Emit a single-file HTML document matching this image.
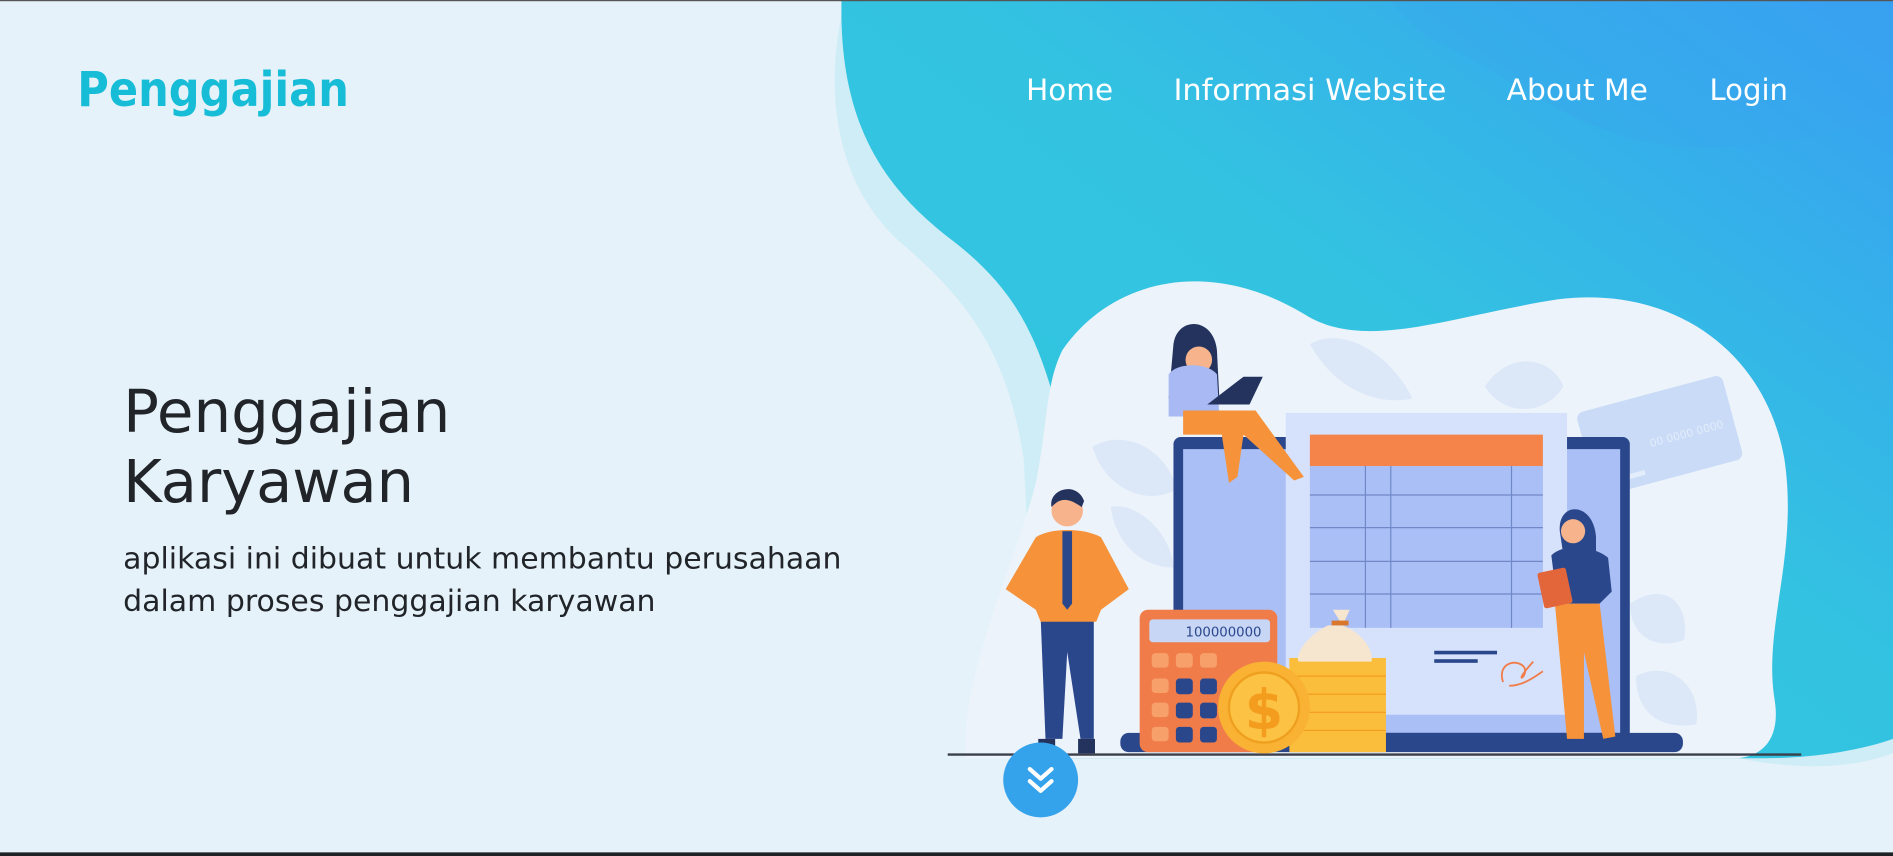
<!DOCTYPE html>
<html><head><meta charset="utf-8"><style>
html,body{margin:0;padding:0;width:1893px;height:856px;overflow:hidden;background:#e5f2fa}
svg{display:block}
text{font-family:"DejaVu Sans","Liberation Sans",sans-serif}
</style></head><body>
<svg width="1893" height="856" viewBox="0 0 1568 709" preserveAspectRatio="none">
<defs>
<linearGradient id="bg" x1="0" y1="1" x2="1" y2="0">
<stop offset="0" stop-color="#2ec6dc"/><stop offset="0.55" stop-color="#33c3e1"/><stop offset="1" stop-color="#379ff2"/>
</linearGradient>
</defs>
<rect width="1568" height="709" fill="#e5f2fa"/>
<!-- light outer blob -->
<path d="M700,0 C682,70 690,150 745,200 C810,255 835,300 848,380 L860,628 L1440,628 C1500,640 1540,634 1568,624 L1568,0 Z" fill="#cfedf6"/>
<!-- blue blob -->
<path d="M697,0 L1568,0 L1568,612 C1540,622 1500,628 1462,628 L880,628 L870,320 C855,270 835,235 790,200 C730,155 695,100 697,0 Z" fill="url(#bg)"/>
<path d="M1180,30 C1250,60 1300,110 1380,120 C1450,128 1520,110 1568,95 L1568,0 L1150,0 Z" fill="#3aa4ee" opacity="0.25"/>
<!-- white illustration blob -->
<path d="M880,290 C920,232 1000,212 1080,260 C1130,292 1200,262 1290,248 C1385,236 1462,290 1478,380 C1490,460 1460,520 1470,580 C1475,612 1460,626 1440,628 L800,628 C795,560 840,470 858,400 C868,350 866,318 880,290 Z" fill="#ecf3fb"/>
<!-- faint leaves -->
<g fill="#dce8f8">
<path d="M1085,285 C1110,270 1150,290 1170,330 C1150,335 1110,330 1085,285Z"/>
<path d="M1230,320 C1250,290 1285,295 1295,320 C1280,345 1245,345 1230,320Z"/>
<path d="M905,370 C930,355 965,370 975,405 C950,420 915,405 905,370Z"/>
<path d="M920,420 C940,415 970,440 972,470 C950,470 925,455 920,420Z"/>
<path d="M1350,500 C1380,480 1400,500 1395,530 C1370,540 1350,525 1350,500Z"/>
<path d="M1355,560 C1385,545 1410,570 1405,600 C1375,605 1355,590 1355,560Z"/>
</g>
<!-- credit card -->
<g transform="rotate(-15 1375 360)">
<rect x="1312" y="325" width="125" height="72" rx="6" fill="#c9dbf6"/>
<rect x="1320" y="385" width="35" height="4" fill="#e4edfb"/>
<text x="1365" y="368" font-size="9" fill="#e4edfb">00 0000 0000</text>
</g>
<!-- ground -->
<line x1="785" y1="625" x2="1492" y2="625" stroke="#3a3f4a" stroke-width="2"/>
<!-- laptop -->
<rect x="972" y="362" width="378" height="250" rx="6" fill="#2b478c"/>
<rect x="980" y="372" width="362" height="235" fill="#aabff6"/>
<rect x="928" y="607" width="466" height="16" rx="7" fill="#2b478c"/>
<!-- document -->
<rect x="1065" y="342" width="233" height="250" fill="#d6e2fb"/>
<rect x="1085" y="360" width="193" height="26" fill="#f4844a"/>
<rect x="1085" y="386" width="193" height="134" fill="#aabff6"/>
<g stroke="#7088c8" stroke-width="1">
<line x1="1085" y1="410" x2="1278" y2="410"/><line x1="1085" y1="437" x2="1278" y2="437"/>
<line x1="1085" y1="465" x2="1278" y2="465"/><line x1="1085" y1="492" x2="1278" y2="492"/>
<line x1="1131" y1="386" x2="1131" y2="520"/><line x1="1152" y1="386" x2="1152" y2="520"/>
<line x1="1252" y1="386" x2="1252" y2="520"/>
</g>
<rect x="1188" y="539" width="52" height="3" fill="#2b478c"/>
<rect x="1188" y="546" width="36" height="3" fill="#2b478c"/>
<path d="M1245,565 C1240,550 1255,545 1262,552 C1268,560 1250,570 1270,548 M1250,568 C1262,568 1272,560 1278,556" stroke="#f07c4a" stroke-width="1.5" fill="none"/>
<!-- calculator -->
<rect x="944" y="505" width="114" height="118" rx="7" fill="#f07c4a"/>
<rect x="952" y="513" width="100" height="19" rx="3" fill="#c7d6f5"/>
<text x="982" y="527" font-size="11" fill="#2b478c">100000000</text>
<g fill="#f7a06a">
<rect x="954" y="541" width="14" height="12" rx="3"/><rect x="974" y="541" width="14" height="12" rx="3"/><rect x="994" y="541" width="14" height="12" rx="3"/>
<rect x="954" y="562" width="14" height="12" rx="3"/><rect x="954" y="582" width="14" height="12" rx="3"/><rect x="954" y="602" width="14" height="12" rx="3"/>
</g>
<g fill="#2b478c">
<rect x="974" y="562" width="14" height="13" rx="3"/><rect x="994" y="562" width="14" height="13" rx="3"/>
<rect x="974" y="582" width="14" height="13" rx="3"/><rect x="994" y="582" width="14" height="13" rx="3"/>
<rect x="974" y="602" width="14" height="13" rx="3"/><rect x="994" y="602" width="14" height="13" rx="3"/>
</g>
<!-- coin stacks -->
<rect x="1068" y="545" width="80" height="78" fill="#fbbd3c"/>
<g stroke="#f39c1e" stroke-width="1"><line x1="1068" y1="560" x2="1148" y2="560"/><line x1="1068" y1="575" x2="1148" y2="575"/><line x1="1068" y1="590" x2="1148" y2="590"/><line x1="1068" y1="605" x2="1148" y2="605"/></g>
<!-- money bag -->
<path d="M1100,518 C1080,528 1072,545 1076,548 L1136,548 C1138,540 1130,525 1112,518 Z" fill="#f6e6cf"/>
<path d="M1104,505 L1118,505 L1112,518 Z" fill="#f6e6cf"/>
<rect x="1103" y="514" width="14" height="4" fill="#d9772c"/>
<!-- coin -->
<circle cx="1047" cy="586" r="38" fill="#f9b233"/>
<circle cx="1047" cy="586" r="29" fill="#fcc244" stroke="#f0a020" stroke-width="2"/>
<text x="1047" y="604" font-size="46" font-weight="bold" fill="#f39c1e" text-anchor="middle">$</text>
<!-- man -->
<path d="M866,612 L862,512 L906,512 L906,612 L895,612 L884,540 L880,612 Z" fill="#2b478c"/>
<path d="M858,445 C870,437 898,437 912,445 L935,488 L912,505 L908,515 L862,515 L858,505 L833,488 Z" fill="#f5923a"/>
<path d="M880,440 L888,440 L888,500 L884,505 L880,500 Z" fill="#2b478c"/>
<circle cx="884" cy="423" r="13" fill="#f6b38c"/>
<path d="M871,420 C868,405 892,398 898,415 L896,420 C885,412 878,412 871,420Z" fill="#24335e"/>
<rect x="860" y="612" width="14" height="12" fill="#24335e"/><rect x="893" y="612" width="14" height="12" fill="#24335e"/>
<!-- sitting woman -->
<path d="M972,285 C975,262 1005,262 1008,290 L1010,330 L968,330 Z" fill="#24335e"/>
<circle cx="993" cy="298" r="11" fill="#f6b38c"/>
<path d="M968,310 C975,300 1000,300 1008,310 L1010,345 L968,345 Z" fill="#a8b9f4"/>
<path d="M980,340 L1040,340 L1080,395 L1072,398 L1030,360 L1025,395 L1018,400 L1012,360 L980,360 Z" fill="#f5923a"/>
<path d="M1000,335 L1030,312 L1046,312 L1035,335 Z" fill="#24335e"/>
<!-- standing woman right -->
<path d="M1292,440 C1290,415 1320,415 1322,445 L1322,460 L1295,460 Z" fill="#2b478c"/>
<circle cx="1303" cy="440" r="10" fill="#f6b38c"/>
<path d="M1285,460 C1295,450 1320,452 1332,462 L1335,490 L1325,500 L1290,500 Z" fill="#2b478c"/>
<path d="M1288,500 L1325,500 L1338,610 L1328,612 L1312,540 L1312,612 L1298,612 Z" fill="#f5923a"/>
<rect x="1276" y="472" width="24" height="30" rx="2" fill="#e3653a" transform="rotate(-12 1288 487)"/>
<path d="M1286,615 L1312,615 L1310,622 L1290,622Z M1326,612 L1340,612 L1340,622 L1326,622Z" fill="#2b478c"/>
<!-- scroll button -->
<circle cx="862" cy="646" r="31" fill="#35a2ec"/>
<path d="M853,637 L862,645 L871,637 M853,647 L862,655 L871,647" stroke="#fff" stroke-width="3.5" fill="none" stroke-linecap="round" stroke-linejoin="round"/>
<!-- text -->
<text x="64" y="88" font-size="40" font-weight="bold" fill="#17bcd6" textLength="225" lengthAdjust="spacingAndGlyphs">Penggajian</text>
<g font-size="24" fill="#ffffff">
<text x="850" y="83" textLength="72" lengthAdjust="spacingAndGlyphs">Home</text>
<text x="972" y="83" textLength="226" lengthAdjust="spacingAndGlyphs">Informasi Website</text>
<text x="1248" y="83" textLength="117" lengthAdjust="spacingAndGlyphs">About Me</text>
<text x="1416" y="83" textLength="65" lengthAdjust="spacingAndGlyphs">Login</text>
</g>
<g font-size="49" fill="#212529">
<text x="102" y="358" textLength="271" lengthAdjust="spacingAndGlyphs">Penggajian</text>
<text x="102" y="416" textLength="241" lengthAdjust="spacingAndGlyphs">Karyawan</text>
</g>
<g font-size="24" fill="#212529">
<text x="102" y="471" textLength="595" lengthAdjust="spacingAndGlyphs">aplikasi ini dibuat untuk membantu perusahaan</text>
<text x="102" y="506" textLength="441" lengthAdjust="spacingAndGlyphs">dalam proses penggajian karyawan</text>
</g>
<rect x="0" y="0" width="1568" height="1" fill="#555"/>
<rect x="0" y="706" width="1568" height="3" fill="#1e2124"/>
</svg>
</body></html>
